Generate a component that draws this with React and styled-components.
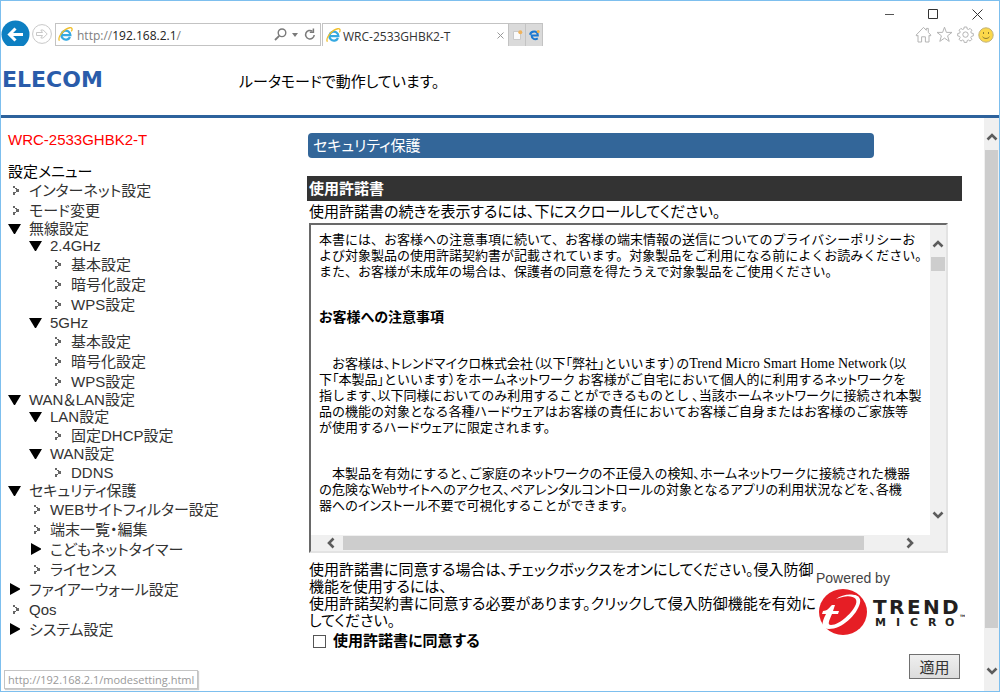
import React, { useState } from 'react'
import styled, { createGlobalStyle } from 'styled-components'

const GlobalStyle = createGlobalStyle`
    * {
        box-sizing: border-box;
    }

    body {
        margin: 0;
        background: #ffffff;
        color: #000000;
        font-family: "Liberation Sans", "Noto Sans CJK JP", sans-serif;
        font-size: 15px;
        font-feature-settings: "palt";
    }

    button {
        padding: 0;
        border: 0;
        background: none;
        font: inherit;
        color: inherit;
    }

    svg {
        display: block;
        flex: none;
    }
    `

/* ---------- window frame ---------- */

const Window = styled.div`
    position: relative;
    display: flex;
    flex-direction: column;
    min-height: 100vh;
    border: 1px solid #7dbfee;
    `

const TitleBar = styled.div`
    display: flex;
    justify-content: flex-end;
    height: 22px;
    `

const WindowButton = styled.button`
    display: flex;
    justify-content: center;
    width: 44px;
    padding-top: 8px;
    `

const Toolbar = styled.div`
    display: flex;
    height: 23px;
    font-family: "Open Sans", "Noto Sans", sans-serif;
    font-size: 12px;
    `

const NavButtons = styled.div`
    display: flex;
    align-items: flex-start;
    gap: 2px;
    width: 54px;
    height: 26px;
    margin-top: -3px;
    overflow: hidden;
    `

const RoundButton = styled.button`
    margin-top: ${props => props.$small ? '4px' : '0'};
    `

const AddressBar = styled.form`
    display: flex;
    align-items: center;
    width: 266px;
    padding: 0 4px 0 2px;
    border: 1px solid #c3c3c3;
    `

const Address = styled.span`
    flex: 1;
    margin-left: 4px;
    padding-top: 2px;
    color: #808080;

    b {
        font-weight: 400;
        color: #222222;
    }
    `

const AddressTool = styled.button`
    margin-left: ${props => props.$gap || 0}px;
    `

const Tab = styled.div`
    display: flex;
    align-items: center;
    width: 187px;
    margin-left: 1px;
    padding: 0 4px 0 3px;
    border: 1px solid #c3c3c3;
    border-bottom: 0;
    color: #333333;

    span {
        flex: 1;
        margin-left: 2px;
        padding-top: 2px;
    }
    `

const TabTool = styled.button`
    display: flex;
    align-items: center;
    justify-content: center;
    width: 17px;
    background: #dadada;
    border: 1px solid #c3c3c3;
    border-width: 1px 1px 0 0;
    `

const Favorites = styled.div`
    display: flex;
    align-items: center;
    gap: 4px;
    margin-left: auto;
    padding-right: 5px;
    `

/* ---------- page ---------- */

const PageHeader = styled.header`
    display: flex;
    align-items: center;
    height: 72px;
    padding-left: 1px;
    border-bottom: 3px solid #2d629c;
    `

const Brand = styled.a`
    width: 237px;
    padding-bottom: 2px;
    font-family: "DejaVu Sans", sans-serif;
    font-size: 22px;
    font-weight: 700;
    line-height: 26px;
    color: #2a5caa;
    text-decoration: none;
    `

const Body = styled.div`
    display: flex;
    flex: 1;
    `

const Sidebar = styled.nav`
    width: 306px;
    padding: 12px 0 0 7px;
    `

const Model = styled.div`
    line-height: 20px;
    color: #ff0000;
    `

const MenuTitle = styled.div`
    margin-top: 14px;
    line-height: 16px;
    `

const MenuList = styled.ul`
    margin: 0;
    padding: 0;
    list-style: none;

    ul {
        padding-left: 21px;
    }
    `

const MenuRow = styled.a`
    display: flex;
    align-items: center;
    height: ${props => props.$open ? 17 : 20}px;
    line-height: 17px;
    color: #333333;
    text-decoration: none;
    white-space: nowrap;
    `

const MenuIcon = styled.span`
    width: 21px;
    padding-left: ${props => props.$leaf ? 4 : 0}px;
    `

const Main = styled.main`
    flex: 1;
    min-width: 0;
    padding: 15px 22px 12px 0;
    `

const PageTitle = styled.h1`
    margin: 0 88px 0 1px;
    padding-left: 5px;
    border-radius: 4px;
    background: #336699;
    color: #ffffff;
    font-size: 15px;
    font-weight: 400;
    line-height: 25px;
    `

const SectionTitle = styled.h2`
    margin: 18px 0 0;
    padding-left: 2px;
    background: #333333;
    color: #ffffff;
    font-size: 15px;
    line-height: 25px;
    `

const Hint = styled.p`
    margin: 0;
    padding-left: 2px;
    line-height: 22px;
    `

const License = styled.section`
    display: grid;
    grid-template-columns: 1fr 16px;
    grid-template-rows: 1fr 16px;
    height: 330px;
    margin: 0 14px 0 2px;
    border: 2px solid;
    border-color: #696969 #e3e3e3 #e3e3e3 #696969;
    `

const LicenseText = styled.div`
    overflow: hidden;
    padding: 7px 0 0 8px;
    font-family: "Liberation Serif", "Noto Sans CJK JP", serif;
    line-height: 16px;
    white-space: nowrap;

    h3 {
        margin: 0 0 30px;
        font-size: 14px;
    }
    `

const Paragraph = styled.p`
    margin: 0 0 30px;
    font-size: 13px;
    font-feature-settings: normal;
    `

const Kana = styled.span`
    font-feature-settings: "palt";
    `

const Latin = styled.span`
    font-size: 14px;
    `

const ScrollTrack = styled.div`
    display: flex;
    flex-direction: ${props => props.$horizontal ? 'row' : 'column'};
    flex: none;
    min-width: 15px;
    background: #f0f0f0;
    `

const ScrollArrow = styled.button`
    display: flex;
    align-items: center;
    justify-content: center;
    flex: 0 0 ${props => props.$size || 32}px;
    padding: ${props => props.$inset || 0};
    `

const ScrollThumb = styled.div`
    flex: ${props => props.$grow || '0 0 14px'};
    margin: ${props => props.$horizontal ? '1px 0' : '0 1px'};
    background: #cdcdcd;
    `

const ScrollSpace = styled.div`
    flex: ${props => props.$grow || 1};
    `

const Corner = styled.div`
    background: #f0f0f0;
    `

const Agreement = styled.div`
    display: flex;
    justify-content: space-between;
    padding: 8px 0 0 2px;
    `

const AgreementText = styled.p`
    margin: 0;
    line-height: 17px;
    white-space: nowrap;
    `

const CheckLabel = styled.label`
    display: flex;
    align-items: center;
    gap: 7px;
    margin-top: 3px;
    padding-left: 4px;
    font-weight: 700;
    line-height: 18px;
    `

const CheckBox = styled.input`
    appearance: none;
    width: 13px;
    height: 13px;
    margin: 0;
    border: 1px solid #555555;
    background: #ffffff;

    &:checked {
        background: #336699;
    }
    `

const Powered = styled.div`
    flex: 0 0 147px;
    padding-top: 7px;
    font-size: 14px;
    line-height: 20px;
    color: #444444;
    `

const Actions = styled.div`
    display: flex;
    justify-content: flex-end;
    margin-top: 4px;
    padding-right: 2px;
    `

const ApplyButton = styled.button`
    width: 51px;
    height: 25px;
    border: 1px solid #707070;
    background: linear-gradient(#efefef, #dcdcdc);
    color: #333333;
    `

const StatusTip = styled.div`
    position: absolute;
    left: 3px;
    bottom: 2px;
    padding: 0 3px;
    border: 1px solid #c4c4c4;
    background: #ffffff;
    box-shadow: 1px 1px 1px #cccccc;
    color: #999999;
    font-family: "Open Sans", sans-serif;
    font-size: 11px;
    line-height: 17px;
    `

/* ---------- icons ---------- */

const IeIcon = () => (
    <svg width="15" height="15" viewBox="0 0 16 16" fill="none">
        <path d="M12.8 10.6A4.8 4.8 0 1 1 13.2 8.6H4.4" stroke="#35a9e1" strokeWidth="2.4" />
        <path d="M1.6 14.6C-.4 12.2 3 5.6 8.6 2.3c3-1.8 5.6-2 6.2-.8.5.9.1 2.2-.6 3.2" stroke="#f0bf2b" strokeWidth="1.4" />
    </svg>
)

const EdgeIcon = () => (
    <svg width="11" height="11" viewBox="0 0 11 11" fill="none">
        <path d="M1 4.8C1.5 2.3 3.2 1.4 5.2 1.4c2.4 0 3.6 1.6 3.6 4H2.6c0 3.6 3.4 4.6 6.2 3" stroke="#1b78d0" strokeWidth="2" />
        <circle cx="9.2" cy="1.6" r="1.5" fill="#f0b04a" />
    </svg>
)

const BackIcon = () => (
    <svg width="29" height="29" viewBox="0 0 29 29">
        <circle cx="14.5" cy="14.5" r="14" fill="#0d7fc2" />
        <path d="M22 14.5H8.5M14.5 8.5l-6 6 6 6" fill="none" stroke="#ffffff" strokeWidth="3" />
    </svg>
)

const ForwardIcon = () => (
    <svg width="20" height="20" viewBox="0 0 20 20" fill="none" stroke="#c8c8c8">
        <circle cx="10" cy="10" r="9.4" />
        <path d="M4.5 8.5h6L8.8 6h2.4l4 4-4 4H8.8l1.7-2.5h-6z" />
    </svg>
)

const SearchIcon = () => (
    <svg width="13" height="13" viewBox="0 0 13 13" fill="none" stroke="#7a7a7a">
        <circle cx="8" cy="4.8" r="3.8" strokeWidth="1.4" />
        <path d="M5.2 7.8L1 12" strokeWidth="1.8" />
    </svg>
)

const RefreshIcon = () => (
    <svg width="12" height="13" viewBox="0 0 12 13" fill="none" stroke="#7a7a7a" strokeWidth="1.5">
        <path d="M8.4 3.2A4.3 4.3 0 1 0 10.2 7" />
        <path d="M9.4.6v3.6H5.8" />
    </svg>
)

const NewTabIcon = () => (
    <svg width="11" height="11" viewBox="0 0 11 11">
        <path d="M1.5 1.5H7l1.5 2v6h-7z" fill="#fafafa" stroke="#c9c9c9" />
        <circle cx="8.3" cy="2.2" r="2" fill="#efb35c" />
    </svg>
)

const HomeIcon = () => (
    <svg width="17" height="17" viewBox="0 0 17 17" fill="none" stroke="#b4b4b4">
        <path d="M1 9.2L8.5 1.4l2.8 2.9V2.4h2v4L16 9.2l-1 .9-1-.8V16h-3.6v-5.2H6.6V16H3V9.3l-1 .8z" />
    </svg>
)

const StarIcon = () => (
    <svg width="17" height="17" viewBox="0 0 17 17" fill="none" stroke="#b4b4b4">
        <path d="M8.5 1.2l1.9 5.2H16l-4.4 3.4 1.6 5.6-4.7-3.3-4.7 3.3 1.6-5.6L1 6.4h5.6z" />
    </svg>
)

const GearIcon = () => (
    <svg width="17" height="17" viewBox="0 0 17 17" fill="none" stroke="#b4b4b4">
        <path d="M7.2 1h2.6l.4 2 1.2.5 1.7-1.1 1.8 1.8-1.1 1.7.5 1.2 2 .4v2.4l-2 .5-.5 1.2 1.1 1.7-1.8 1.8-1.7-1.1-1.2.5-.4 1.9H7.2l-.4-1.9-1.2-.5-1.7 1.1-1.8-1.8 1.1-1.7-.5-1.2-2-.5V7.5l2-.4.5-1.2-1.1-1.7 1.8-1.8 1.7 1.1L6.8 3z" />
        <circle cx="8.5" cy="8.6" r="2.7" />
    </svg>
)

const SmileIcon = () => (
    <svg width="16" height="16" viewBox="0 0 16 16">
        <circle cx="8" cy="8" r="7.2" fill="#fbd84a" stroke="#c2b27a" />
        <path d="M5.5 5v2M10.5 5v2M4.5 9.8c1.8 2.2 5.2 2.2 7 0" fill="none" stroke="#8d7a30" />
    </svg>
)

const LeafIcon = () => (
    <svg width="7" height="9" viewBox="0 0 7 9" fill="#666666">
        <path d="M1 0h2v2H1zM3 2h2v1H3zM4 3h3v3H4zM3 6h1v1H3zM1 6h2v3H1z" />
    </svg>
)

const FolderIcon = ({ open }) => (
    <svg width="13" height="12" viewBox="0 0 13 12">
        <path d={open ? 'M0 1h13L7 11H6z' : 'M2 0v12l10-5.5v-1z'} />
    </svg>
)

const arrows = {
    up: 'M1.5 8.5L6 4l4.5 4.5',
    down: 'M1.5 3.5L6 8l4.5-4.5',
    left: 'M8.5 1.5L4 6l4.5 4.5',
    right: 'M3.5 1.5L8 6l-4.5 4.5',
}

const Chevron = ({ to }) => (
    <svg width="12" height="12" viewBox="0 0 12 12" fill="none" stroke="#5c5c5c" strokeWidth="2.6">
        <path d={arrows[to]} />
    </svg>
)

const TrendLogo = () => (
    <svg width="149" height="48" viewBox="0 0 149 48" fontFamily="DejaVu Sans, sans-serif" fontWeight="700">
        <ellipse cx="27" cy="24" rx="24" ry="23" fill="#e61e25" />
        <path d="M6 26l1-3c4 0 6-3 9-6h3l-2 6h6l-1 3h-6c-3 7-5 11-1 11 9 0 22-13 25-21 2-6-3-8-11-8 8-3 17-1 15 7-3 12-18 26-31 26-8 0-8-6-3-15z" fill="#ffffff" />
        <path d="M20 11c7-5 17-6 23-2-7-2-15-1-23 2z" fill="#ffffff" />
        <g fill="#231f20">
            <text x="57 73 91 107 126" y="26" fontSize="20">TREND</text>
            <text x="59 80 94 112 129" y="38" fontSize="11">MICRO</text>
            <text x="144" y="29" fontSize="3">TM</text>
        </g>
    </svg>
)

/* ---------- content ---------- */

const menu = [
    { label: 'インターネット設定' },
    { label: 'モード変更' },
    {
        label: '無線設定', open: true, items: [
            { label: '2.4GHz', open: true, items: [{ label: '基本設定' }, { label: '暗号化設定' }, { label: 'WPS設定' }] },
            { label: '5GHz', open: true, items: [{ label: '基本設定' }, { label: '暗号化設定' }, { label: 'WPS設定' }] },
        ]
    },
    {
        label: 'WAN＆LAN設定', open: true, items: [
            { label: 'LAN設定', open: true, items: [{ label: '固定DHCP設定' }] },
            { label: 'WAN設定', open: true, items: [{ label: 'DDNS' }] },
        ]
    },
    {
        label: 'セキュリティ保護', open: true, items: [
            { label: 'WEBサイトフィルター設定' },
            { label: '端末一覧・編集' },
            { label: 'こどもネットタイマー', items: [] },
            { label: 'ライセンス' },
        ]
    },
    { label: 'ファイアーウォール設定', items: [] },
    { label: 'Qos' },
    { label: 'システム設定', items: [] },
]

const notice = [
    '　お客様は、トレンドマイクロ株式会社（以下「弊社」といいます）のTrend Micro Smart Home Network（以',
    '下「本製品」といいます）をホームネットワーク お客様がご自宅において個人的に利用するネットワークを',
    '指します、以下同様においてのみ利用することができるものとし 、当該ホームネットワークに接続され本製',
    '品の機能の対象となる各種ハードウェアはお客様の責任においてお客様ご自身またはお客様のご家族等',
    'が使用するハードウェアに限定されます。',
]

const features = [
    '　本製品を有効にすると、ご家庭のネットワークの不正侵入の検知、ホームネットワークに接続された機器',
    'の危険なWebサイトへのアクセス、ペアレンタルコントロールの対象となるアプリの利用状況などを、各機',
    '器へのインストール不要で可視化することができます。',
]

// katakana and brackets are set proportionally, latin words one size up
function Line({ text }) {
    return text.split(/([ァ-ー（）「」、]+|[A-Za-z][A-Za-z ]*)/).map((part, i) => {
        if (i % 2 === 0) return part
        return /[A-Za-z]/.test(part) ? <Latin key={i}>{part}</Latin> : <Kana key={i}>{part}</Kana>
    })
}

function Lines({ lines }) {
    return (
        <Paragraph>
            {lines.map(text => (
                <React.Fragment key={text}>
                    <Line text={text} /><br />
                </React.Fragment>
            ))}
        </Paragraph>
    )
}

function Menu({ items }) {
    return (
        <MenuList>
            {items.map(item => (
                <li key={item.label}>
                    <MenuRow href='#' $open={item.open}>
                        <MenuIcon $leaf={!item.items}>
                            {item.items ? <FolderIcon open={item.open} /> : <LeafIcon />}
                        </MenuIcon>
                        {item.label}
                    </MenuRow>
                    {item.open && <Menu items={item.items} />}
                </li>
            ))}
        </MenuList>
    )
}

function BrowserBar() {
    return (
        <>
            <TitleBar>
                <WindowButton aria-label='Minimize'>
                    <svg width="11" height="11" stroke="#555555"><path d="M1 5.5h9" /></svg>
                </WindowButton>
                <WindowButton aria-label='Maximize'>
                    <svg width="11" height="11" stroke="#333333" fill="none"><path d="M.5.5h9v9h-9z" /></svg>
                </WindowButton>
                <WindowButton aria-label='Close'>
                    <svg width="11" height="11" stroke="#333333"><path d="M.5.5l10 10M10.5.5l-10 10" /></svg>
                </WindowButton>
            </TitleBar>
            <Toolbar>
                <NavButtons>
                    <RoundButton aria-label='Back'><BackIcon /></RoundButton>
                    <RoundButton $small aria-label='Forward'><ForwardIcon /></RoundButton>
                </NavButtons>
                <AddressBar>
                    <IeIcon />
                    <Address>http://<b>192.168.2.1</b>/</Address>
                    <AddressTool type='button' aria-label='Search'><SearchIcon /></AddressTool>
                    <AddressTool type='button' aria-label='History' $gap={5}>
                        <svg width="6" height="4" fill="#7a7a7a"><path d="M0 0h6L3 4z" /></svg>
                    </AddressTool>
                    <AddressTool type='button' aria-label='Refresh' $gap={6}><RefreshIcon /></AddressTool>
                </AddressBar>
                <Tab>
                    <IeIcon />
                    <span>WRC-2533GHBK2-T</span>
                    <button aria-label='Close tab'>
                        <svg width="7" height="7" stroke="#999999"><path d="M.5.5l6 6M6.5.5l-6 6" /></svg>
                    </button>
                </Tab>
                <TabTool aria-label='New tab'><NewTabIcon /></TabTool>
                <TabTool aria-label='Open in Edge'><EdgeIcon /></TabTool>
                <Favorites>
                    <button aria-label='Home'><HomeIcon /></button>
                    <button aria-label='Favorites'><StarIcon /></button>
                    <button aria-label='Tools'><GearIcon /></button>
                    <button aria-label='Feedback'><SmileIcon /></button>
                </Favorites>
            </Toolbar>
        </>
    )
}

function LicenseBox() {
    return (
        <License>
            <LicenseText>
                <Paragraph>
                    本書には、お客様への注意事項に続いて、お客様の端末情報の送信についてのプライバシーポリシーお<br />
                    よび対象製品の使用許諾契約書が記載されています。対象製品をご利用になる前によくお読みください。<br />
                    また、お客様が未成年の場合は、保護者の同意を得たうえで対象製品をご使用ください。
                </Paragraph>
                <h3>お客様への注意事項</h3>
                <Lines lines={notice} />
                <Lines lines={features} />
            </LicenseText>
            <ScrollTrack>
                <ScrollArrow $inset='6px 0 0' aria-label='Up'><Chevron to='up' /></ScrollArrow>
                <ScrollThumb />
                <ScrollSpace />
                <ScrollArrow $size={40} aria-label='Down'><Chevron to='down' /></ScrollArrow>
            </ScrollTrack>
            <ScrollTrack $horizontal>
                <ScrollArrow $inset='0 0 0 8px' aria-label='Left'><Chevron to='left' /></ScrollArrow>
                <ScrollThumb $horizontal $grow={20} />
                <ScrollSpace />
                <ScrollArrow $size={40} aria-label='Right'><Chevron to='right' /></ScrollArrow>
            </ScrollTrack>
            <Corner />
        </License>
    )
}

export default function App() {
    const [agreed, setAgreed] = useState(false)

    return (
        <Window>
            <GlobalStyle />
            <BrowserBar />
            <PageHeader>
                <Brand href='#'>ELECOM</Brand>
                <div>ルータモードで動作しています。</div>
            </PageHeader>
            <Body>
                <Sidebar>
                    <Model>WRC-2533GHBK2-T</Model>
                    <MenuTitle>設定メニュー</MenuTitle>
                    <Menu items={menu} />
                </Sidebar>
                <Main>
                    <PageTitle>セキュリティ保護</PageTitle>
                    <SectionTitle>使用許諾書</SectionTitle>
                    <Hint>使用許諾書の続きを表示するには、下にスクロールしてください。</Hint>
                    <LicenseBox />
                    <Agreement>
                        <div>
                            <AgreementText>
                                使用許諾書に同意する場合は、チェックボックスをオンにしてください。侵入防御<br />
                                機能を使用するには、<br />
                                使用許諾契約書に同意する必要があります。クリックして侵入防御機能を有効に<br />
                                してください。
                            </AgreementText>
                            <CheckLabel>
                                <CheckBox type='checkbox' checked={agreed} onChange={e => setAgreed(e.target.checked)} />
                                使用許諾書に同意する
                            </CheckLabel>
                        </div>
                        <Powered>
                            Powered by
                            <TrendLogo />
                        </Powered>
                    </Agreement>
                    <Actions>
                        <ApplyButton>適用</ApplyButton>
                    </Actions>
                </Main>
                <ScrollTrack>
                    <ScrollArrow $inset='6px 0 0' aria-label='Scroll up'><Chevron to='up' /></ScrollArrow>
                    <ScrollThumb $grow='478 1 14px' />
                    <ScrollSpace $grow='24 1 0' />
                    <ScrollArrow $size={40} aria-label='Scroll down'><Chevron to='down' /></ScrollArrow>
                </ScrollTrack>
            </Body>
            <StatusTip>http://192.168.2.1/modesetting.html</StatusTip>
        </Window>
    )
}
